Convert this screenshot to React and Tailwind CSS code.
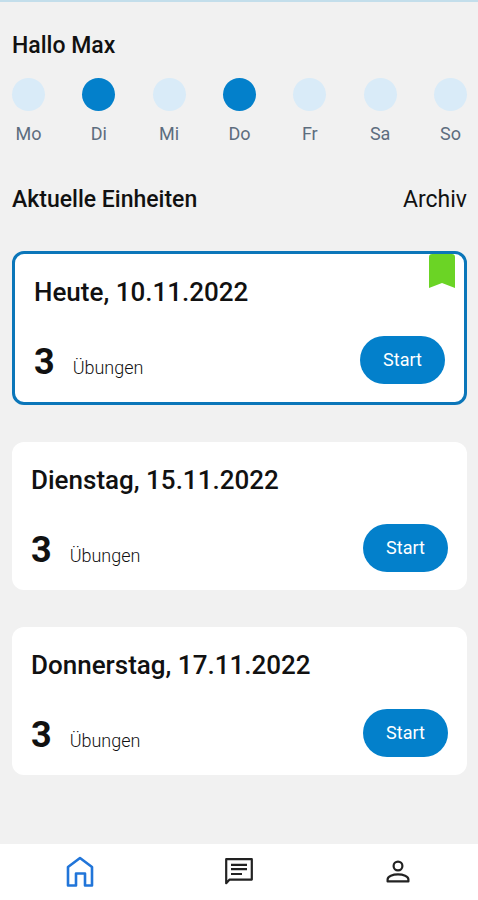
import React from 'react'

const days = [
  { label: 'Mo', active: false },
  { label: 'Di', active: true },
  { label: 'Mi', active: false },
  { label: 'Do', active: true },
  { label: 'Fr', active: false },
  { label: 'Sa', active: false },
  { label: 'So', active: false },
]

const units = [
  { title: 'Heute, 10.11.2022', count: 3, today: true },
  { title: 'Dienstag, 15.11.2022', count: 3 },
  { title: 'Donnerstag, 17.11.2022', count: 3 },
]

/* ───── Icons ───── */
function HomeIcon() {
  return (
    <svg width="28" height="32" viewBox="0 0 28 32" fill="none" stroke="#2175d9" strokeWidth="2.6" strokeLinejoin="round">
      <path d="M2 29.5V11L14 2l12 9v18.5h-7V17.5H10v12z" />
    </svg>
  )
}

function ChatIcon() {
  return (
    <svg width="30" height="30" viewBox="0 0 30 30" fill="none" stroke="#222" strokeWidth="2.2">
      <path d="M2.2 26.2V2.2h25.6v20.4H5.6z" strokeLinejoin="round" />
      <path d="M7 7.8h16M7 12.2h16M7 17h11" />
    </svg>
  )
}

function PersonIcon() {
  return (
    <svg width="26" height="26" viewBox="0 0 26 26" fill="none" stroke="#222" strokeWidth="2.2">
      <circle cx="13" cy="7" r="4.4" />
      <path d="M2.6 22.4v-2c0-3 5.2-5 10.4-5s10.4 2 10.4 5v2z" strokeLinejoin="round" />
    </svg>
  )
}

/* ───── Weekday with its training dot ───── */
function Day({ label, active }) {
  return (
    <li className="flex w-[33px] flex-col items-center gap-[11px]">
      <span className={`size-[33px] rounded-full ${active ? 'bg-[#0380cb]' : 'bg-[#d9ebf8]'}`} />
      <span className="text-lg leading-6 text-[#5d6d7e]">{label}</span>
    </li>
  )
}

/* ───── Training unit card ───── */
function UnitCard({ unit }) {
  return (
    <article className={`relative rounded-xl bg-white ${unit.today ? 'border-3 border-[#0b76b9]' : ''}`}>
      {unit.today && (
        <svg className="absolute top-0 right-[9px]" width="26" height="34" viewBox="0 0 26 34" fill="#6bd425">
          <path d="M0 34V3q0-3 3-3h20q3 0 3 3v31l-13-5z" />
        </svg>
      )}
      <div className="px-[19px] pt-[22px] pb-3.5">
        <h3 className="text-[26px] leading-8 font-medium">{unit.title}</h3>
        <div className="mt-7 flex items-start justify-between">
          <p className="flex items-baseline gap-[18px]">
            <span className="text-4xl leading-[52px] font-bold">{unit.count}</span>
            <span className="text-lg leading-6 font-light">Übungen</span>
          </p>
          <button type="button" className="h-12 w-[85px] rounded-full bg-[#0380cb] text-lg text-white">
            Start
          </button>
        </div>
      </div>
    </article>
  )
}

const App = () => {
  return (
    <div className="flex min-h-screen flex-col border-t-2 border-[#c3deeb] bg-[#f1f1f1] font-[Roboto,sans-serif] text-[#111]">
      <main className="flex-1 pt-7 pr-[11px] pb-10 pl-3">
        <h1 className="text-[23px] leading-8 font-medium">Hallo Max</h1>
        <ul className="mt-4 flex justify-between">
          {days.map((day) => (
            <Day key={day.label} {...day} />
          ))}
        </ul>

        <div className="mt-[38px] flex items-center justify-between">
          <h2 className="text-[23px] leading-8 font-medium">Aktuelle Einheiten</h2>
          <a href="#archiv" className="text-[23px] leading-8">Archiv</a>
        </div>

        <div className="mt-[35px] flex flex-col gap-[37px]">
          {units.map((unit) => (
            <UnitCard key={unit.title} unit={unit} />
          ))}
        </div>
      </main>

      <nav className="grid h-14 grid-cols-3 items-center bg-white">
        <a href="#home" aria-label="Home" className="flex justify-center"><HomeIcon /></a>
        <a href="#chat" aria-label="Chat" className="flex justify-center"><ChatIcon /></a>
        <a href="#profil" aria-label="Profil" className="flex justify-center"><PersonIcon /></a>
      </nav>
    </div>
  )
}

export default App
